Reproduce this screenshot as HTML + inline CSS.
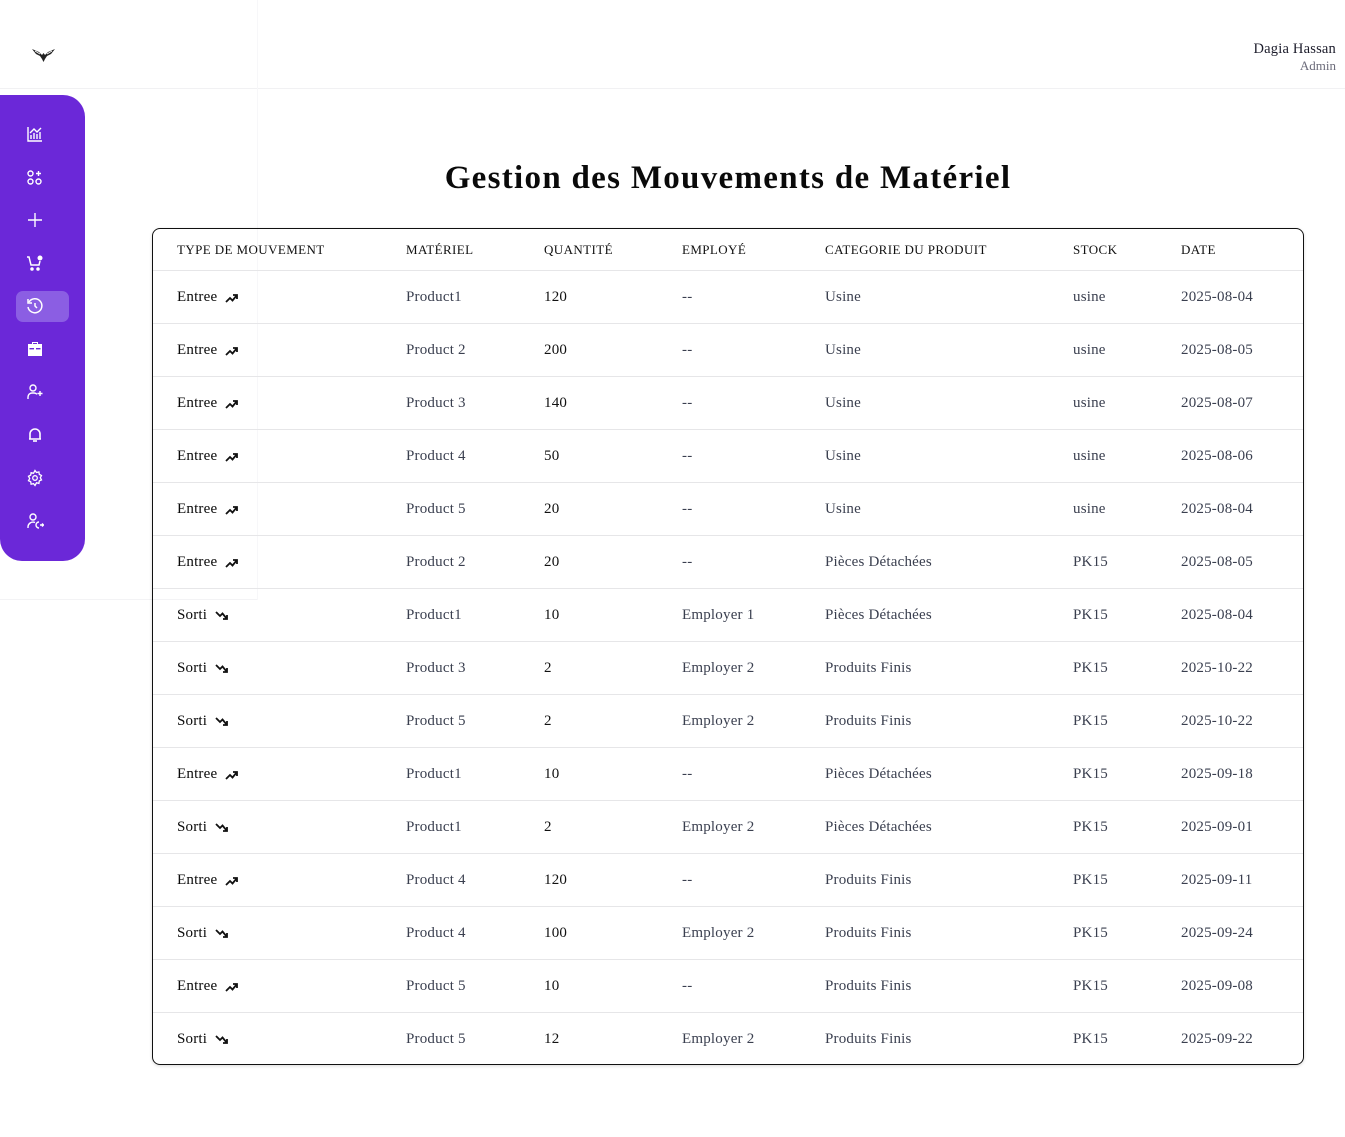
<!DOCTYPE html>
<html><head><meta charset="utf-8"><style>
*{margin:0;padding:0;box-sizing:border-box}
body{width:1345px;height:1137px;background:#fff;font-family:"Liberation Serif","DejaVu Serif",serif;position:relative;overflow:hidden;color:#111}
.hdr{position:absolute;left:0;top:0;width:1345px;height:89px;border-bottom:1px solid #f1f1f3}
.user{position:absolute;right:9px;top:41px;text-align:right}
.user .n{font-size:14.5px;color:#1b1b2a;letter-spacing:.2px}
.user .r{font-size:13px;color:#6b6b7a;margin-top:0}
.vline{position:absolute;left:257px;top:0;width:1px;height:600px;background:#f7f7f9}
.hline{position:absolute;left:0;top:599px;width:257px;height:1px;background:#f3f3f5}
.side{position:absolute;left:0;top:95px;width:85px;height:466px;background:#6b28d8;border-radius:0 22px 22px 22px}
.side .act{position:absolute;left:16px;top:196px;width:53px;height:31px;border-radius:7px;background:#8b5ee3}
.side svg{position:absolute;left:26px}
h1{position:absolute;left:0;width:1456px;text-align:center;top:160px;font-size:33px;letter-spacing:1.3px;font-weight:bold;color:#0a0a0a}
.tw{position:absolute;left:152px;top:228px;width:1152px;height:837px;border:1px solid #111;border-radius:8px;overflow:hidden;box-shadow:0 1px 3px rgba(0,0,0,.15)}
table{border-collapse:collapse;table-layout:fixed;width:1150px}
th{height:41px;font-size:13px;font-weight:normal;text-align:left;color:#111;letter-spacing:.4px;border-bottom:1px solid #e6e6e8;white-space:nowrap;padding-top:1px}
td{height:53px;font-size:15px;border-bottom:1px solid #e6e6e8;color:#3a3f4f;white-space:nowrap;letter-spacing:.2px;padding-top:2px}
tr:last-child td{border-bottom:none}
th:first-child,td:first-child{padding-left:24px}
td:first-child{color:#0a0a0a}
.q{color:#111}
.ic{display:inline-block;vertical-align:middle;margin-left:8px}
</style></head><body>
<div class="hdr">
<svg style="position:absolute;left:31px;top:47px" width="25" height="16" viewBox="0 0 25 16"><path d="M1 2 L8 5 L11 8 L12.5 6 L14 8 L17 5 L24 2 L20 7 L16 9 L14 12 L12.5 15 L11 12 L9 9 L5 7 Z" fill="#222"/><path d="M4 4 L9 7 M21 4 L16 7" stroke="#fff" stroke-width="0.8"/></svg>
<div class="user"><div class="n">Dagia Hassan</div><div class="r">Admin</div></div>
</div>
<div class="vline"></div><div class="hline"></div>
<div class="side">
<div class="act"></div>
<svg style="top:30px" width="18" height="18" viewBox="0 0 18 18" fill="none" stroke="#fff" stroke-width="1.4"><path d="M2 2v14h14"/><path d="M5 14v-4M8 14V8M11 14V9M14 14V7"/><path d="M4 8l4-4 3 3 4-4"/></svg>
<svg style="top:74px" width="18" height="18" viewBox="0 0 18 18" fill="none" stroke="#fff" stroke-width="1.4"><rect x="2" y="2" width="5" height="5" rx="2.5"/><rect x="2" y="10" width="5" height="5" rx="2.5"/><rect x="10" y="10" width="5" height="5" rx="2.5"/><path d="M12.5 2v5M10 4.5h5"/></svg>
<svg style="top:116px" width="18" height="18" viewBox="0 0 18 18" fill="none" stroke="#fff" stroke-width="1.4"><path d="M9 2v14M2 9h14"/></svg>
<svg style="top:159px" width="18" height="18" viewBox="0 0 18 18" fill="none" stroke="#fff" stroke-width="1.5"><path d="M1 3h2l2 8h8l1-4"/><circle cx="6" cy="15" r="1" fill="#fff"/><circle cx="12" cy="15" r="1" fill="#fff"/><circle cx="14" cy="4" r="2.5" fill="#fff" stroke="none"/></svg>
<svg style="top:202px" width="18" height="18" viewBox="0 0 18 18" fill="none" stroke="#fff" stroke-width="1.5"><path d="M3 5a7 7 0 1 1-1 5"/><path d="M2 2v4h4"/><path d="M9 6v3l2 2"/></svg>
<svg style="top:245px" width="18" height="18" viewBox="0 0 18 18" fill="#fff"><path d="M6 2h6v2h4v12H2V4h4zM7 3v1h4V3z"/><rect x="3.5" y="8" width="11" height="1.4" fill="#6b28d8"/><rect x="8" y="8" width="2" height="2.5"/></svg>
<svg style="top:288px" width="18" height="18" viewBox="0 0 18 18" fill="none" stroke="#fff" stroke-width="1.4"><circle cx="7" cy="5" r="3"/><path d="M2 16v-2a4 4 0 0 1 4-4h2a4 4 0 0 1 3 1.3"/><path d="M14 8v5M11.5 10.5h5"/></svg>
<svg style="top:331px" width="18" height="18" viewBox="0 0 18 18" fill="none" stroke="#fff" stroke-width="1.6"><path d="M4 13V8a5 5 0 0 1 10 0v5H3h12"/><path d="M7 15h4" /></svg>
<svg style="top:374px" width="18" height="18" viewBox="0 0 18 18" fill="none" stroke="#fff" stroke-width="1.3"><path d="M9 1.5l1.5 2 2.4-.6.4 2.4 2.2 1.2-1.2 2.2 1.2 2.2-2.2 1-.4 2.5-2.4-.6L9 16.5l-1.5-1.9-2.4.6-.4-2.5-2.2-1 1.2-2.2L2.5 7.3l2.2-1.2.4-2.4 2.4.6z"/><circle cx="9" cy="9" r="2.3"/></svg>
<svg style="top:417px" width="18" height="18" viewBox="0 0 18 18" fill="none" stroke="#fff" stroke-width="1.4"><circle cx="7" cy="5" r="3"/><path d="M2 16v-1a5 5 0 0 1 7-4.5"/><path d="M13 10a3 3 0 0 0 0 6"/><path d="M14 13h3M16 11.5l1.5 1.5-1.5 1.5"/></svg>
</div>
<h1>Gestion des Mouvements de Matériel</h1>
<div class="tw"><table>
<colgroup><col style="width:253px"><col style="width:138px"><col style="width:138px"><col style="width:143px"><col style="width:248px"><col style="width:108px"><col style="width:122px"></colgroup>
<tr><th>TYPE DE MOUVEMENT</th><th>MATÉRIEL</th><th>QUANTITÉ</th><th>EMPLOYÉ</th><th>CATEGORIE DU PRODUIT</th><th>STOCK</th><th>DATE</th></tr>
<tr><td>Entree<svg class="ic" width="14" height="10" viewBox="0 0 14 10" fill="none" stroke="#111" stroke-width="1.8"><path d="M1 9l4-4 2.5 2.5L12 2M8 2h4v4"/></svg></td><td>Product1</td><td class="q">120</td><td>--</td><td>Usine</td><td>usine</td><td>2025-08-04</td></tr>
<tr><td>Entree<svg class="ic" width="14" height="10" viewBox="0 0 14 10" fill="none" stroke="#111" stroke-width="1.8"><path d="M1 9l4-4 2.5 2.5L12 2M8 2h4v4"/></svg></td><td>Product 2</td><td class="q">200</td><td>--</td><td>Usine</td><td>usine</td><td>2025-08-05</td></tr>
<tr><td>Entree<svg class="ic" width="14" height="10" viewBox="0 0 14 10" fill="none" stroke="#111" stroke-width="1.8"><path d="M1 9l4-4 2.5 2.5L12 2M8 2h4v4"/></svg></td><td>Product 3</td><td class="q">140</td><td>--</td><td>Usine</td><td>usine</td><td>2025-08-07</td></tr>
<tr><td>Entree<svg class="ic" width="14" height="10" viewBox="0 0 14 10" fill="none" stroke="#111" stroke-width="1.8"><path d="M1 9l4-4 2.5 2.5L12 2M8 2h4v4"/></svg></td><td>Product 4</td><td class="q">50</td><td>--</td><td>Usine</td><td>usine</td><td>2025-08-06</td></tr>
<tr><td>Entree<svg class="ic" width="14" height="10" viewBox="0 0 14 10" fill="none" stroke="#111" stroke-width="1.8"><path d="M1 9l4-4 2.5 2.5L12 2M8 2h4v4"/></svg></td><td>Product 5</td><td class="q">20</td><td>--</td><td>Usine</td><td>usine</td><td>2025-08-04</td></tr>
<tr><td>Entree<svg class="ic" width="14" height="10" viewBox="0 0 14 10" fill="none" stroke="#111" stroke-width="1.8"><path d="M1 9l4-4 2.5 2.5L12 2M8 2h4v4"/></svg></td><td>Product 2</td><td class="q">20</td><td>--</td><td>Pièces Détachées</td><td>PK15</td><td>2025-08-05</td></tr>
<tr><td>Sorti<svg class="ic" width="14" height="10" viewBox="0 0 14 10" fill="none" stroke="#111" stroke-width="1.8"><path d="M1 1l4 4 2.5-2.5L12 8M8 8h4V4"/></svg></td><td>Product1</td><td class="q">10</td><td>Employer 1</td><td>Pièces Détachées</td><td>PK15</td><td>2025-08-04</td></tr>
<tr><td>Sorti<svg class="ic" width="14" height="10" viewBox="0 0 14 10" fill="none" stroke="#111" stroke-width="1.8"><path d="M1 1l4 4 2.5-2.5L12 8M8 8h4V4"/></svg></td><td>Product 3</td><td class="q">2</td><td>Employer 2</td><td>Produits Finis</td><td>PK15</td><td>2025-10-22</td></tr>
<tr><td>Sorti<svg class="ic" width="14" height="10" viewBox="0 0 14 10" fill="none" stroke="#111" stroke-width="1.8"><path d="M1 1l4 4 2.5-2.5L12 8M8 8h4V4"/></svg></td><td>Product 5</td><td class="q">2</td><td>Employer 2</td><td>Produits Finis</td><td>PK15</td><td>2025-10-22</td></tr>
<tr><td>Entree<svg class="ic" width="14" height="10" viewBox="0 0 14 10" fill="none" stroke="#111" stroke-width="1.8"><path d="M1 9l4-4 2.5 2.5L12 2M8 2h4v4"/></svg></td><td>Product1</td><td class="q">10</td><td>--</td><td>Pièces Détachées</td><td>PK15</td><td>2025-09-18</td></tr>
<tr><td>Sorti<svg class="ic" width="14" height="10" viewBox="0 0 14 10" fill="none" stroke="#111" stroke-width="1.8"><path d="M1 1l4 4 2.5-2.5L12 8M8 8h4V4"/></svg></td><td>Product1</td><td class="q">2</td><td>Employer 2</td><td>Pièces Détachées</td><td>PK15</td><td>2025-09-01</td></tr>
<tr><td>Entree<svg class="ic" width="14" height="10" viewBox="0 0 14 10" fill="none" stroke="#111" stroke-width="1.8"><path d="M1 9l4-4 2.5 2.5L12 2M8 2h4v4"/></svg></td><td>Product 4</td><td class="q">120</td><td>--</td><td>Produits Finis</td><td>PK15</td><td>2025-09-11</td></tr>
<tr><td>Sorti<svg class="ic" width="14" height="10" viewBox="0 0 14 10" fill="none" stroke="#111" stroke-width="1.8"><path d="M1 1l4 4 2.5-2.5L12 8M8 8h4V4"/></svg></td><td>Product 4</td><td class="q">100</td><td>Employer 2</td><td>Produits Finis</td><td>PK15</td><td>2025-09-24</td></tr>
<tr><td>Entree<svg class="ic" width="14" height="10" viewBox="0 0 14 10" fill="none" stroke="#111" stroke-width="1.8"><path d="M1 9l4-4 2.5 2.5L12 2M8 2h4v4"/></svg></td><td>Product 5</td><td class="q">10</td><td>--</td><td>Produits Finis</td><td>PK15</td><td>2025-09-08</td></tr>
<tr><td>Sorti<svg class="ic" width="14" height="10" viewBox="0 0 14 10" fill="none" stroke="#111" stroke-width="1.8"><path d="M1 1l4 4 2.5-2.5L12 8M8 8h4V4"/></svg></td><td>Product 5</td><td class="q">12</td><td>Employer 2</td><td>Produits Finis</td><td>PK15</td><td>2025-09-22</td></tr>
</table></div>
</body></html>
